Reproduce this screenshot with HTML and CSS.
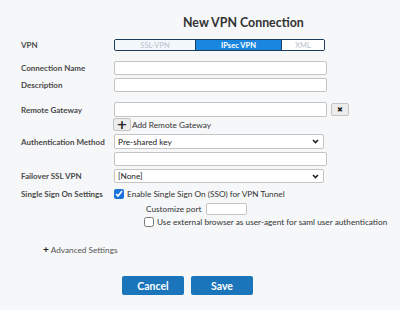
FILE: index.html
```html
<!DOCTYPE html>
<html lang="en">
  <head>
    <meta charset="UTF-8" />
    <title>New VPN Connection</title>
    <link rel="stylesheet" href="styles.css">
  </head>
  <body>
    <div class="dialog">
      <h1 class="title">New VPN Connection</h1>

      <div class="row row-vpn">
        <label class="label">VPN</label>
        <div class="tabs">
          <span class="tab tab-ssl">SSL-VPN</span>
          <span class="tab tab-active">IPsec VPN</span>
          <span class="tab tab-xml">XML</span>
        </div>
      </div>

      <div class="row row-name">
        <label class="label">Connection Name</label>
        <input class="text-input" type="text" />
      </div>

      <div class="row row-desc">
        <label class="label">Description</label>
        <input class="text-input" type="text" />
      </div>

      <div class="row row-gateway">
        <label class="label">Remote Gateway</label>
        <div class="gateway">
          <input class="text-input" type="text" />
          <button class="icon-btn remove-btn">&#10006;</button>
        </div>
      </div>

      <div class="row row-add">
        <span class="label"></span>
        <div class="add-line">
          <button class="icon-btn add-btn">+</button>
          <span>Add Remote Gateway</span>
        </div>
      </div>

      <div class="row row-auth">
        <label class="label">Authentication Method</label>
        <div class="select">
          <span>Pre-shared key</span>
          <svg width="7" height="5" viewBox="0 0 7 5"><path d="M1 1l2.5 2.5L6 1" fill="none" stroke="#222" stroke-width="1.6"/></svg>
        </div>
      </div>

      <div class="row row-key">
        <span class="label"></span>
        <input class="text-input" type="password" />
      </div>

      <div class="row row-failover">
        <label class="label">Failover SSL VPN</label>
        <div class="select">
          <span>[None]</span>
          <svg width="7" height="5" viewBox="0 0 7 5"><path d="M1 1l2.5 2.5L6 1" fill="none" stroke="#222" stroke-width="1.6"/></svg>
        </div>
      </div>

      <div class="row row-sso">
        <label class="label">Single Sign On Settings</label>
        <div class="sso">
          <label class="check-line">
            <input class="check" type="checkbox" checked />
            <span>Enable Single Sign On (SSO) for VPN Tunnel</span>
          </label>
          <div class="sso-sub">
            <div class="port-line">
              <span>Customize port</span>
              <input class="port-input" type="text" />
            </div>
            <label class="check-line">
              <input class="check" type="checkbox" />
              <span>Use external browser as user-agent for saml user authentication</span>
            </label>
          </div>
        </div>
      </div>

      <div class="advanced"><b>+</b> Advanced Settings</div>

      <div class="actions">
        <button class="btn">Cancel</button>
        <button class="btn">Save</button>
      </div>
    </div>
  </body>
</html>
```

FILE: styles.css
```css
* {
  margin: 0;
  padding: 0;
  box-sizing: border-box;
}

body {
  font-family: Lato, "Open Sans", sans-serif;
  font-size: 8.25px;
  color: #333;
  background-color: #f6f7f9;
  width: 400px;
  height: 310px;
  overflow: hidden;
}

.dialog {
  padding: 15px 0 0 21px;
}

.title {
  font-size: 12.4px;
  font-weight: bold;
  color: #333;
  line-height: 16px;
  margin-left: 162px;
}

.row {
  display: flex;
  align-items: center;
  white-space: nowrap;
}

.label {
  width: 93px;
  flex-shrink: 0;
  font-size: 8px;
  font-weight: bold;
  color: #4a4a4a;
}

.row-vpn { margin-top: 8px; }
.row-name { margin-top: 10px; }
.row-desc { margin-top: 3px; }
.row-gateway { margin-top: 10px; }
.row-add { margin-top: 1px; }
.row-auth { margin-top: 3px; }
.row-key { margin-top: 3px; }
.row-failover { margin-top: 3px; }
.row-sso { margin-top: 6px; align-items: flex-start; }

.tabs {
  display: flex;
  width: 211px;
  height: 12px;
  border: 1px solid #1d3b5c;
  border-radius: 2px;
  overflow: hidden;
}

.tab {
  display: flex;
  align-items: center;
  justify-content: center;
  font-size: 7.5px;
  color: #b9c2cc;
  background-color: #f3f8fc;
}

.tab-ssl {
  width: 81px;
  border-right: 1px solid #1d3b5c;
}

.tab-active {
  width: 85px;
  background-color: #1a86e0;
  color: #fff;
  font-weight: bold;
}

.tab-xml {
  flex: 1;
  border-left: 1px solid #1d3b5c;
  background-color: #fff;
}

.text-input {
  width: 213px;
  height: 14px;
  border: 1px solid #c4c4c4;
  border-radius: 2px;
  background-color: #fff;
}

.row-gateway .text-input {
  height: 15px;
}

.gateway {
  display: flex;
  align-items: center;
  gap: 4px;
}

.icon-btn {
  display: flex;
  align-items: center;
  justify-content: center;
  border: 1px solid #c4c4c4;
  border-radius: 2px;
  background-color: #ececec;
  color: #222;
  font-family: "DejaVu Sans", sans-serif;
}

.remove-btn {
  width: 18px;
  height: 13px;
  font-size: 7px;
}

.add-line {
  display: flex;
  align-items: center;
  gap: 1px;
}

.add-btn {
  width: 18px;
  height: 13px;
  font-size: 13px;
  font-weight: bold;
  line-height: 1;
  margin-left: -1px;
}

.select {
  display: flex;
  align-items: center;
  justify-content: space-between;
  width: 210px;
  height: 15px;
  padding: 0 4px 0 3px;
  border: 1px solid #c4c4c4;
  border-radius: 2px;
  background-color: #fff;
  color: #222;
}

.row-failover .select {
  height: 14px;
}

.sso {
  display: flex;
  flex-direction: column;
}

.check-line {
  display: flex;
  align-items: center;
  gap: 3px;
  color: #333;
}

.check {
  width: 10px;
  height: 10px;
  margin: 0;
  accent-color: #1a73d8;
}

.sso-sub {
  display: flex;
  flex-direction: column;
  gap: 2px;
  margin: 4px 0 0 30px;
}

.port-line {
  display: flex;
  align-items: center;
  gap: 5px;
  padding-left: 2px;
}

.port-input {
  width: 41px;
  height: 12px;
  border: 1px solid #c4c4c4;
  border-radius: 2px;
  background-color: #fff;
}

.advanced {
  margin: 16px 0 0 22px;
  color: #555;
}

.advanced b {
  color: #222;
  font-size: 10px;
}

.actions {
  display: flex;
  gap: 7px;
  margin: 21px 0 0 101px;
}

.btn {
  width: 62px;
  height: 19px;
  border: none;
  border-radius: 2px;
  background-color: #1a75bb;
  color: #fff;
  font-family: Lato, "Open Sans", sans-serif;
  font-size: 10.5px;
  font-weight: bold;
}
```
